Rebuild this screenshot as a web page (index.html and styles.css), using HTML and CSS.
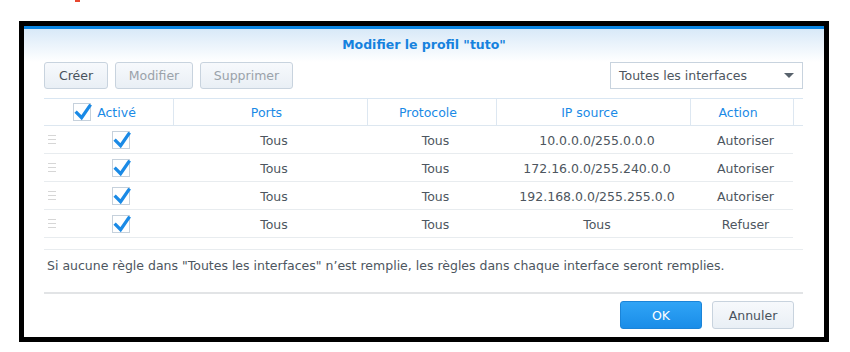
FILE: index.html
```html
<!DOCTYPE html>
<html lang="fr">
<head>
    <meta charset="UTF-8">
    <title>Modifier le profil</title>
    <link rel="stylesheet" href="styles.css">
</head>
<body>
    <div class="top-strip"><span class="mark"></span></div>
    <div class="frame">
        <div class="dialog">
            <div class="dialog-head">
                <h1>Modifier le profil "tuto"</h1>
            </div>

            <div class="dialog-body">
                <div class="toolbar">
                    <button class="btn btn-create">Créer</button>
                    <button class="btn btn-edit" disabled>Modifier</button>
                    <button class="btn btn-delete" disabled>Supprimer</button>
                    <div class="select">
                        <span>Toutes les interfaces</span>
                        <span class="arrow"></span>
                    </div>
                </div>

                <div class="grid">
                    <div class="grid-head">
                        <div class="hcell first">
                            <svg class="check" width="18" height="18" viewBox="0 0 18 18"><rect x="0.5" y="0.5" width="17" height="17" fill="#fff" stroke="#c6d1dc"/><path d="M2.6 8.6 L8.6 14.6 L17.6 1.6" fill="none" stroke="#1a8ae6" stroke-width="3.3"/></svg>
                            <span>Activé</span>
                        </div>
                        <div class="hcell">Ports</div>
                        <div class="hcell">Protocole</div>
                        <div class="hcell">IP source</div>
                        <div class="hcell">Action</div>
                        <div class="hcell spacer"></div>
                    </div>

                    <div class="grid-row">
                        <div class="cell first"><span class="handle"></span><svg class="check" width="18" height="18" viewBox="0 0 18 18"><rect x="0.5" y="0.5" width="17" height="17" fill="#fff" stroke="#c6d1dc"/><path d="M2.6 8.6 L8.6 14.6 L17.6 1.6" fill="none" stroke="#1a8ae6" stroke-width="3.3"/></svg></div>
                        <div class="cell">Tous</div>
                        <div class="cell">Tous</div>
                        <div class="cell">10.0.0.0/255.0.0.0</div>
                        <div class="cell">Autoriser</div>
                    </div>
                    <div class="grid-row">
                        <div class="cell first"><span class="handle"></span><svg class="check" width="18" height="18" viewBox="0 0 18 18"><rect x="0.5" y="0.5" width="17" height="17" fill="#fff" stroke="#c6d1dc"/><path d="M2.6 8.6 L8.6 14.6 L17.6 1.6" fill="none" stroke="#1a8ae6" stroke-width="3.3"/></svg></div>
                        <div class="cell">Tous</div>
                        <div class="cell">Tous</div>
                        <div class="cell">172.16.0.0/255.240.0.0</div>
                        <div class="cell">Autoriser</div>
                    </div>
                    <div class="grid-row">
                        <div class="cell first"><span class="handle"></span><svg class="check" width="18" height="18" viewBox="0 0 18 18"><rect x="0.5" y="0.5" width="17" height="17" fill="#fff" stroke="#c6d1dc"/><path d="M2.6 8.6 L8.6 14.6 L17.6 1.6" fill="none" stroke="#1a8ae6" stroke-width="3.3"/></svg></div>
                        <div class="cell">Tous</div>
                        <div class="cell">Tous</div>
                        <div class="cell">192.168.0.0/255.255.0.0</div>
                        <div class="cell">Autoriser</div>
                    </div>
                    <div class="grid-row">
                        <div class="cell first"><span class="handle"></span><svg class="check" width="18" height="18" viewBox="0 0 18 18"><rect x="0.5" y="0.5" width="17" height="17" fill="#fff" stroke="#c6d1dc"/><path d="M2.6 8.6 L8.6 14.6 L17.6 1.6" fill="none" stroke="#1a8ae6" stroke-width="3.3"/></svg></div>
                        <div class="cell">Tous</div>
                        <div class="cell">Tous</div>
                        <div class="cell">Tous</div>
                        <div class="cell">Refuser</div>
                    </div>
                </div>

                <p class="note">Si aucune règle dans "Toutes les interfaces" n’est remplie, les règles dans chaque interface seront remplies.</p>
            </div>

            <div class="dialog-foot">
                <button class="btn primary">OK</button>
                <button class="btn">Annuler</button>
            </div>
        </div>
    </div>
</body>
</html>
```

FILE: styles.css
```css
body {
    margin: 0;
    background-color: #ffffff;
    font-family: "DejaVu Sans", Verdana, sans-serif;
    font-size: 12.5px;
    color: #4d5660;
}

.top-strip {
    height: 21px;
}

.mark {
    display: block;
    margin-left: 75px;
    width: 5px;
    height: 2px;
    background-color: #e8462e;
}

.frame {
    margin-left: 19px;
    width: 810px;
    height: 321px;
    border: 5px solid #000000;
    box-sizing: border-box;
}

.dialog {
    height: 100%;
    border-top: 3px solid #0a86e3;
    box-sizing: border-box;
    background-color: #ffffff;
}

.dialog-head {
    height: 33px;
    background: linear-gradient(#d8e9f8, #ffffff);
}

.dialog-head h1 {
    margin: 0;
    padding-top: 8px;
    text-align: center;
    font-size: 12.5px;
    font-weight: bold;
    color: #1682de;
}

.dialog-body {
    padding: 0 21px 0 20px;
}

.toolbar {
    display: flex;
    gap: 7px;
    height: 27px;
}

.btn {
    font-family: "DejaVu Sans", Verdana, sans-serif;
    font-size: 12.5px;
    color: #48525c;
    height: 27px;
    padding: 0;
    border: 1px solid #c8d3de;
    border-radius: 3px;
    background: linear-gradient(#f7f9fc, #e9eff5);
    box-sizing: border-box;
}

.btn:disabled {
    color: #9aa2aa;
}

.btn-create {
    width: 64px;
}

.btn-edit {
    width: 78px;
}

.btn-delete {
    width: 93px;
}

.select {
    margin-left: auto;
    width: 193px;
    height: 27px;
    border: 1px solid #c8d3de;
    box-sizing: border-box;
    display: flex;
    align-items: center;
    justify-content: space-between;
    padding: 0 8px 0 8px;
    color: #4d5660;
}

.arrow {
    width: 0;
    height: 0;
    border-left: 5px solid transparent;
    border-right: 5px solid transparent;
    border-top: 5px solid #58626c;
}

.grid {
    margin-top: 9px;
}

.grid-head {
    display: grid;
    grid-template-columns: 129px 194px 129px 194px 103px 10px;
    height: 28px;
    border-top: 1px solid #d9e6f2;
    border-bottom: 1px solid #dde7f0;
    box-sizing: border-box;
}

.hcell {
    display: flex;
    align-items: center;
    justify-content: center;
    padding-right: 8px;
    color: #1a8ae6;
    border-left: 1px solid #dde7f1;
}

.hcell.first {
    border-left: none;
    gap: 6px;
}

.hcell.spacer {
    padding: 0;
}

.check {
    overflow: visible;
    flex-shrink: 0;
}

.grid-row {
    display: grid;
    grid-template-columns: 129px 194px 129px 194px 103px;
    width: 749px;
    height: 28px;
    border-bottom: 1px solid #e8ecef;
    box-sizing: border-box;
}

.cell {
    display: flex;
    align-items: center;
    justify-content: center;
    padding: 2px 0 0 8px;
}

.cell.first {
    justify-content: flex-start;
    padding: 0 0 0 4px;
}

.handle {
    width: 8px;
    height: 7px;
    border-top: 1px solid #d6d6d6;
    border-bottom: 1px solid #d6d6d6;
    background: linear-gradient(transparent 3px, #d6d6d6 3px, #d6d6d6 4px, transparent 4px);
    margin-right: 56px;
}

.note {
    margin: 11px 0 0 0;
    padding: 8px 3px 18px 3px;
    line-height: 16px;
    border-top: 1px solid #e8ecef;
    border-bottom: 2px solid #e2e4e6;
}

.dialog-foot {
    display: flex;
    justify-content: flex-end;
    gap: 10px;
    padding: 7px 30px 0 0;
}

.dialog-foot .btn {
    height: 28px;
    width: 82px;
}

.btn.primary {
    color: #ffffff;
    border-color: #1b84d8;
    background: linear-gradient(#30a4f6, #1a8de8);
}
```
